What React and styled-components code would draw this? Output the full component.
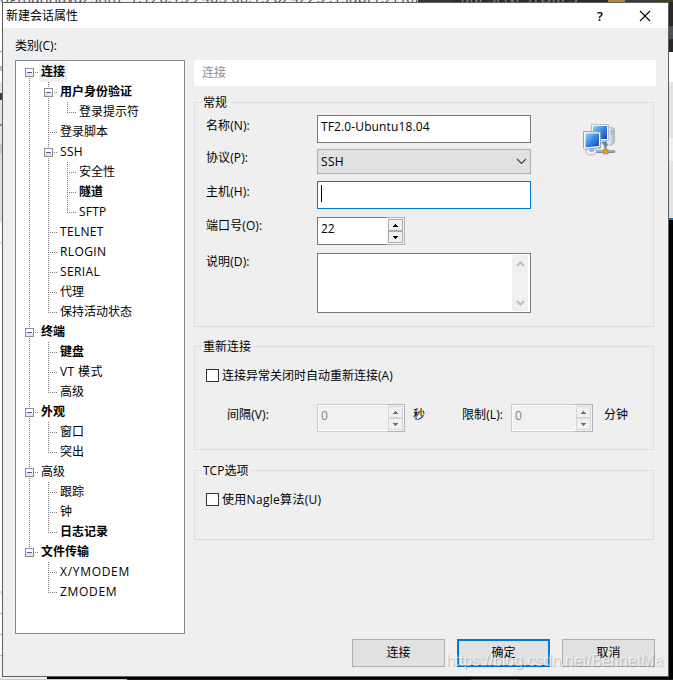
import React from "react";
import styled, { createGlobalStyle, css } from "styled-components";

const GlobalStyle = createGlobalStyle`
  * { box-sizing: border-box; }
  body {
    margin: 0;
    font: 12px/18px "Open Sans", "Noto Sans CJK SC", sans-serif;
    color: #000;
  }
`;

/* ---------- desktop behind the dialog ---------- */

const Desktop = styled.div`
  position: relative;
  display: grid;
  grid-template: 2px 675px 3px / 2px 667px 4px;
  width: 673px;
  height: 680px;
  overflow: hidden;
  background: #fff;
`;

const TopStrip = styled.div`
  grid-column: 1 / -1;
  display: grid;
  grid-template-columns: 418px 35px 155px 17px 35px 1fr;
  overflow: hidden;
  background: #2b2b2b;
`;

const StripText = styled.div`
  overflow: hidden;
  white-space: nowrap;
  height: 2px;
  padding-left: ${(p) => p.$pad || 0}px;
  background: ${(p) => p.$bg};
  color: ${(p) => p.$ink};
  font-size: 15px;
  line-height: 18px;

  span { display: block; margin-top: -12px; }
`;

const Band = styled.div`
  height: ${(p) => p.$h}px;
  background: ${(p) => p.$bg};
`;

const Side = styled.div`
  overflow: hidden;
`;

const BottomStrip = styled.div`
  grid-column: 1 / -1;
  display: grid;
  grid-template-columns: 47px 80px 344px 48px 1fr;
  background: #000;
`;

const BottomCell = styled.div`
  background: ${(p) => p.$bg};
  border-bottom: 1px solid ${(p) => p.$line};
`;

/* ---------- dialog ---------- */

const Dialog = styled.section`
  display: flex;
  flex-direction: column;
  border: 1px solid #5f5f5f;
  background: #efefef;
`;

const TitleBar = styled.header`
  display: flex;
  align-items: center;
  height: 25px;
  padding: 0 17px 0 3px;
  background: #fff;
`;

const Title = styled.h1`
  flex: 1;
  margin: 0;
  font-size: 12px;
  font-weight: 400;
`;

const TitleButton = styled.button`
  display: flex;
  align-items: center;
  justify-content: center;
  width: 12px;
  height: 18px;
  margin-left: 33px;
  padding: 0;
  border: 0;
  background: none;
  font: 600 13px/18px "Open Sans", sans-serif;
`;

const Content = styled.div`
  display: grid;
  grid-template-columns: 170px 462px;
  column-gap: 9px;
  padding: 9px 0 0 12px;
`;

const Caption = styled.div`
  grid-column: 1 / -1;
  height: 23px;
`;

const Tree = styled.ul`
  height: 574px;
  margin: 0;
  padding: 1px 0 0 4px;
  list-style: none;
  border: 1px solid #828790;
  background: #fff;
`;

const TreeRow = styled.li`
  display: flex;
  height: 20px;
`;

const TreeText = styled.span`
  padding: 0 2px;
  line-height: 20px;
  letter-spacing: ${(p) => p.$track || 0}px;
  white-space: nowrap;
  font-weight: ${(p) => (p.$bold ? 700 : 400)};
  background: ${(p) => (p.$selected ? "#f0f0f0" : "none")};
`;

const Pane = styled.main`
  display: flex;
  flex-direction: column;
`;

const PaneHeader = styled.h2`
  height: 26px;
  margin: 0 0 16px;
  padding-left: 8px;
  font-size: 12px;
  font-weight: 500;
  line-height: 26px;
  color: #a0a0a0;
  background: #fff;
`;

const Group = styled.section`
  width: 460px;
  height: ${(p) => p.$h}px;
  margin-bottom: ${(p) => p.$gap}px;
  padding-left: 11px;
  border: 1px solid #dcdcdc;
`;

const Legend = styled.h3`
  width: fit-content;
  height: 18px;
  margin: -9px 0 0 -5px;
  padding: 0 3px 0 2px;
  font-size: 12px;
  font-weight: 400;
  background: #efefef;
`;

const FormArea = styled.div`
  display: grid;
  grid-template-columns: 325px auto;
  column-gap: 51px;
  padding-top: 3px;
`;

const Fields = styled.div`
  display: flex;
  flex-direction: column;
`;

const IconSlot = styled.div`
  padding-top: 8px;
`;

const Field = styled.div`
  display: grid;
  grid-template-columns: 111px 1fr;
  margin-bottom: ${(p) => p.$gap}px;
`;

const Label = styled.label`
  line-height: ${(p) => p.$lh || 18}px;
  letter-spacing: 0.1px;
  white-space: nowrap;
`;

const TextBox = styled.div`
  display: flex;
  align-items: flex-start;
  height: 28px;
  padding: 2px 3px;
  border: 1px solid ${(p) => (p.$focused ? "#0078d7" : "#7a7a7a")};
  background: #fff;
  letter-spacing: 0.12px;
`;

const Caret = styled.i`
  width: 1px;
  height: 17px;
  margin-top: 1px;
  background: #000;
`;

const Select = styled.div`
  display: flex;
  align-items: center;
  justify-content: space-between;
  height: 25px;
  padding: 0 3px;
  border: 1px solid #adadad;
  background: #e1e1e1;
  letter-spacing: 0.3px;
`;

const Memo = styled.div`
  display: flex;
  justify-content: flex-end;
  height: 60px;
  padding: 1px;
  border: 1px solid #7a7a7a;
  background: #fff;
`;

const ScrollTrack = styled.div`
  display: flex;
  flex-direction: column;
  align-items: center;
  justify-content: space-between;
  width: 16px;
  margin-right: 1px;
  padding: 6px 0 5px;
  background: #f0f0f0;
`;

const SpinFrame = styled.div`
  display: flex;
  width: ${(p) => p.$w}px;
  height: 28px;
  border: 1px solid ${(p) => (p.$disabled ? "#cccccc" : "#7a7a7a")};
  border-right: 0;
  background: #fff;
`;

const SpinValue = styled.span`
  flex: 1;
  padding-left: 3px;
  ${(p) =>
    p.$disabled
      ? css`
          margin: 1px 0 1px 1px;
          padding-left: 2px;
          color: #838383;
          background: #f0f0f0;
          line-height: 20px;
        `
      : css`
          line-height: 22px;
        `}
`;

const SpinButtons = styled.div`
  display: grid;
  grid-template-rows: 12px 12px;
  width: 18px;
  height: 28px;
  margin-top: -1px;
  padding: 1px 1px 1px 1px;
  border: 1px solid #b2b2b8;
  border-left: 0;
  background: #f4f4f4;
`;

const SpinButton = styled.div`
  display: flex;
  align-items: center;
  justify-content: center;
  border: 1px solid ${(p) => (p.$disabled ? "#d6d6d6" : "#acacac")};
  background: #f0f0f0;
`;

const CheckRow = styled.div`
  display: flex;
  align-items: center;
  gap: 3px;
  height: 18px;
  margin-top: 11px;
  letter-spacing: ${(p) => p.$track || 0}px;
`;

const Box = styled.span`
  width: 13px;
  height: 13px;
  margin-bottom: 2px;
  border: 1px solid #333;
  background: #fff;
`;

const IntervalRow = styled.div`
  display: grid;
  grid-template-columns: 90px 96px 49px 49px 93px auto;
  margin: 19px 0 0 21px;
`;

const Footer = styled.footer`
  display: flex;
  gap: 12px;
  margin: 5px 0 0 349px;
`;

const Button = styled.button`
  width: 93px;
  height: 28px;
  padding: 0 0 1px;
  border: ${(p) => (p.$primary ? "2px solid #0078d7" : "1px solid #adadad")};
  background: #e1e1e1;
  font: inherit;
  color: #000;
`;

const Watermark = styled.div`
  position: absolute;
  left: 446px;
  top: 652px;
  font: 15.75px/18px "Liberation Sans", sans-serif;
  white-space: nowrap;
  color: rgba(255, 255, 255, 0.62);
  text-shadow: 1px 1px 1px rgba(0, 0, 0, 0.22);
`;

/* ---------- glyphs ---------- */

/* up/down: halves of the dotted guide; arm: horizontal stub; box: expander */
function Guide({ up, down, arm, box }) {
  return (
    <svg width="19" height="20" shapeRendering="crispEdges" fill="none">
      <g stroke="#7b7b7b" strokeDasharray="1 1">
        {up && <path d="M9.5 0V10" />}
        {down && <path d="M9.5 10V20" />}
        {arm && <path d="M9 10.5H18" />}
      </g>
      {box && (
        <g>
          <rect x="5" y="6" width="9" height="9" fill="#8c8c8c" />
          <rect x="6" y="7" width="7" height="4" fill="#fff" />
          <rect x="6" y="11" width="7" height="3" fill="#e6e6e6" />
          <rect x="7" y="10" width="5" height="1" fill="#3f5fb0" />
        </g>
      )}
    </svg>
  );
}

function Triangle({ up, color }) {
  return (
    <svg width="5" height="3" shapeRendering="crispEdges" fill={color}>
      {up ? <path d="M2 0h1v1h1v1h1v1H0V2h1V1h1z" /> : <path d="M0 0h5v1H4v1H3v1H2V2H1V1H0z" />}
    </svg>
  );
}

function Chevron({ up, w, h, color, weight }) {
  const d = up
    ? `M1 ${h - 1}L${w / 2} 1.5L${w - 1} ${h - 1}`
    : `M1 1L${w / 2} ${h - 1.5}L${w - 1} 1`;
  return (
    <svg width={w} height={h} fill="none" stroke={color} strokeWidth={weight}>
      <path d={d} />
    </svg>
  );
}

function ComputersIcon() {
  return (
    <svg width="34" height="34" viewBox="0 0 34 34">
      <defs>
        <linearGradient id="screen" x1="0" y1="0" x2="1" y2="1">
          <stop offset="0" stopColor="#8fd8fb" />
          <stop offset="0.45" stopColor="#3d8ee2" />
          <stop offset="1" stopColor="#1746b5" />
        </linearGradient>
        <linearGradient id="tower" x1="0" y1="0" x2="1" y2="0">
          <stop offset="0" stopColor="#fafcfd" />
          <stop offset="1" stopColor="#a9bac5" />
        </linearGradient>
      </defs>
      <path d="M26 4l4 .5 2.500 1.500v14l-3 2-5 .5z" fill="url(#tower)" stroke="#9babb6" strokeWidth=".6" />
      <path d="M28 8.500h4M28 11h4" stroke="#8fa0ac" strokeWidth=".7" />
      <path d="M19 19l5-1 2 4-3 2z" fill="#6f8f9f" />
      <path d="M9.500 1.500h17v16h-17z" fill="#f4f6f7" stroke="#b3c0c7" />
      <path d="M11 3h14v13H11z" fill="url(#screen)" />
      <path d="M13 28.500h18.500" stroke="#758b9b" strokeWidth="3.200" strokeLinecap="round" />
      <path d="M13 28h19" stroke="#c3d1da" strokeWidth="1" />
      <path d="M23.500 19v8" stroke="#6e8491" strokeWidth="2" />
      <path d="M4 26c-1 4 1 6 5 6s5.500-2 5.500-5l-2-2z" fill="#e9eff2" stroke="#a2b4bf" />
      <path d="M7 25l1 4 4-.5v-3.500z" fill="#9fb2be" />
      <path d="M1.500 8.500L18.500 9v15.500L3 26.500l-1.500-1.500z" fill="#f8fafb" stroke="#93a3ae" />
      <path d="M3.500 10.500h13.500v12.500l-13.500 1.500z" fill="url(#screen)" />
      <path d="M16 24.500l3 1-2 1z" fill="#8ac58a" />
      <rect x="21.500" y="26.500" width="4.500" height="4.500" fill="#f59b12" stroke="#d57a08" strokeWidth=".6" />
    </svg>
  );
}

/* ---------- data ---------- */

const TREE = [
  { text: "连接", bold: true, selected: true, children: [
    { text: "用户身份验证", bold: true, children: [{ text: "登录提示符" }] },
    { text: "登录脚本" },
    { text: "SSH", track: 0.3, children: [{ text: "安全性" }, { text: "隧道", bold: true }, { text: "SFTP", track: 0.2 }] },
    { text: "TELNET", track: 0.3 },
    { text: "RLOGIN", track: 0.4 },
    { text: "SERIAL", track: 0.4 },
    { text: "代理" },
    { text: "保持活动状态" },
  ] },
  { text: "终端", bold: true, children: [
    { text: "键盘", bold: true }, { text: "VT 模式", track: 0.4 }, { text: "高级" },
  ] },
  { text: "外观", bold: true, children: [{ text: "窗口" }, { text: "突出" }] },
  { text: "高级", children: [
    { text: "跟踪" }, { text: "钟" }, { text: "日志记录", bold: true },
  ] },
  { text: "文件传输", bold: true, children: [
    { text: "X/YMODEM", track: 0.7 }, { text: "ZMODEM", track: 0.7 },
  ] },
];

function renderNodes(nodes, trail = []) {
  return nodes.flatMap((node, i) => {
    const last = i === nodes.length - 1;
    const top = trail.length === 0 && i === 0;
    const key = [...trail, i].join("-") + node.text;
    return [
      <TreeRow key={key}>
        {trail.map((open, k) => <Guide key={k} up={open} down={open} />)}
        <Guide up={!top} down={!last} arm box={!!node.children} />
        <TreeText $bold={node.bold} $selected={node.selected} $track={node.track}>{node.text}</TreeText>
      </TreeRow>,
      ...(node.children ? renderNodes(node.children, [...trail, !last]) : []),
    ];
  });
}

function Spin({ value, width, disabled }) {
  const ink = disabled ? "#6d6d6d" : "#000";
  return (
    <SpinFrame $w={width} $disabled={disabled}>
      <SpinValue $disabled={disabled}>{value}</SpinValue>
      <SpinButtons>
        <SpinButton $disabled={disabled}><Triangle up color={ink} /></SpinButton>
        <SpinButton $disabled={disabled}><Triangle color={ink} /></SpinButton>
      </SpinButtons>
    </SpinFrame>
  );
}

const LEFT_BANDS = [
  [49, "#fff"], [1, "#999"], [14, "#fff"], [5, "#c9b8a8"], [11, "#fff"], [11, "#e3e3e3"],
  [7, "#3b3b58"], [24, "#e3e3e3"], [2, "#4caf50"], [18, "#e3e3e3"], [10, "#cdc4bd"],
  [68, "#dedede"], [20, "#fafafa"], [2, "#dcdcdc"], [347, "#fff"], [3, "#e0e0e0"], [19, "#fff"],
  [1, "#b5b5b5"], [20, "#fff"], [1, "#b5b5b5"], [20, "#fff"], [1, "#b5b5b5"], [21, "#f4f4f4"],
];

const RIGHT_BANDS = [
  [24, "#2b2826"], [13, "#4a5058"], [13, "#2b2826"], [30, "#fff"], [56, "#e3e3e3"],
  [23, "#f0f0f0"], [57, "#e3e3e3"], [2, "#0078d7"], [457, "#000"],
];

export default function App() {
  return (
    <>
      <GlobalStyle />
      <Desktop>
        <TopStrip>
          <StripText $bg="#f4f4f4" $ink="#555"><span>ngman/java2shm=1.126.1.2240.200.1.202422.2.1subt1.2LKIKUKM</span></StripText>
          <Band $h={2} $bg="#3a332c" />
          <StripText $bg="#2b2b2b" $ink="#8a8f98" $pad={8}><span>aut   SLNESTORES</span></StripText>
          <Band $h={2} $bg="#b58a35" />
          <Band $h={2} $bg="#3a3a3a" />
          <Band $h={2} $bg="#4a3c22" />
        </TopStrip>
        <Side>{LEFT_BANDS.map(([h, bg], i) => <Band key={i} $h={h} $bg={bg} />)}</Side>
        <Dialog>
          <TitleBar>
            <Title>新建会话属性</Title>
            <TitleButton>?</TitleButton>
            <TitleButton>
              <svg width="12" height="12" viewBox="0 0 12 12" stroke="#000" strokeWidth="1.1">
                <path d="M1 1l10 10M11 1L1 11" />
              </svg>
            </TitleButton>
          </TitleBar>
          <Content>
            <Caption>类别(C):</Caption>
            <Tree>{renderNodes(TREE)}</Tree>
            <Pane>
              <PaneHeader>连接</PaneHeader>
              <Group $h={225} $gap={19}>
                <Legend>常规</Legend>
                <FormArea>
                  <Fields>
                    <Field $gap={6}>
                      <Label $lh={22}>名称(N):</Label>
                      <TextBox>TF2.0-Ubuntu18.04</TextBox>
                    </Field>
                    <Field $gap={7}>
                      <Label>协议(P):</Label>
                      <Select>SSH<Chevron w={11} h={7} color="#444" weight={1.2} /></Select>
                    </Field>
                    <Field $gap={8}>
                      <Label $lh={22}>主机(H):</Label>
                      <TextBox $focused><Caret /></TextBox>
                    </Field>
                    <Field $gap={8}>
                      <Label>端口号(O):</Label>
                      <Spin value="22" width={88} />
                    </Field>
                    <Field $gap={0}>
                      <Label>说明(D):</Label>
                      <Memo>
                        <ScrollTrack>
                          <Chevron up w={9} h={6} color="#bfbfbf" weight={2} />
                          <Chevron w={9} h={6} color="#bfbfbf" weight={2} />
                        </ScrollTrack>
                      </Memo>
                    </Field>
                  </Fields>
                  <IconSlot><ComputersIcon /></IconSlot>
                </FormArea>
              </Group>
              <Group $h={104} $gap={20}>
                <Legend>重新连接</Legend>
                <CheckRow><Box />连接异常关闭时自动重新连接(A)</CheckRow>
                <IntervalRow>
                  <Label $lh={22}>间隔(V):</Label>
                  <Spin value="0" width={88} disabled />
                  <Label $lh={22}>秒</Label>
                  <Label $lh={22}>限制(L):</Label>
                  <Spin value="0" width={82} disabled />
                  <Label $lh={22}>分钟</Label>
                </IntervalRow>
              </Group>
              <Group $h={70} $gap={0}>
                <Legend>TCP选项</Legend>
                <CheckRow $track={0.3}><Box />使用Nagle算法(U)</CheckRow>
              </Group>
            </Pane>
          </Content>
          <Footer>
            <Button>连接</Button>
            <Button $primary>确定</Button>
            <Button>取消</Button>
          </Footer>
        </Dialog>
        <Side>{RIGHT_BANDS.map(([h, bg], i) => <Band key={i} $h={h} $bg={bg} />)}</Side>
        <BottomStrip>
          <BottomCell $bg="#f0f0f0" $line="#c8c8c8" />
          <BottomCell $bg="#000" $line="#c8c8c8" />
          <BottomCell $bg="#000" $line="#1c1618" />
          <BottomCell $bg="#000" $line="#4a4a4a" />
          <BottomCell $bg="#000" $line="#1c1c1c" />
        </BottomStrip>
        <Watermark>https://blog.csdn.net/BennetMa</Watermark>
      </Desktop>
    </>
  );
}
